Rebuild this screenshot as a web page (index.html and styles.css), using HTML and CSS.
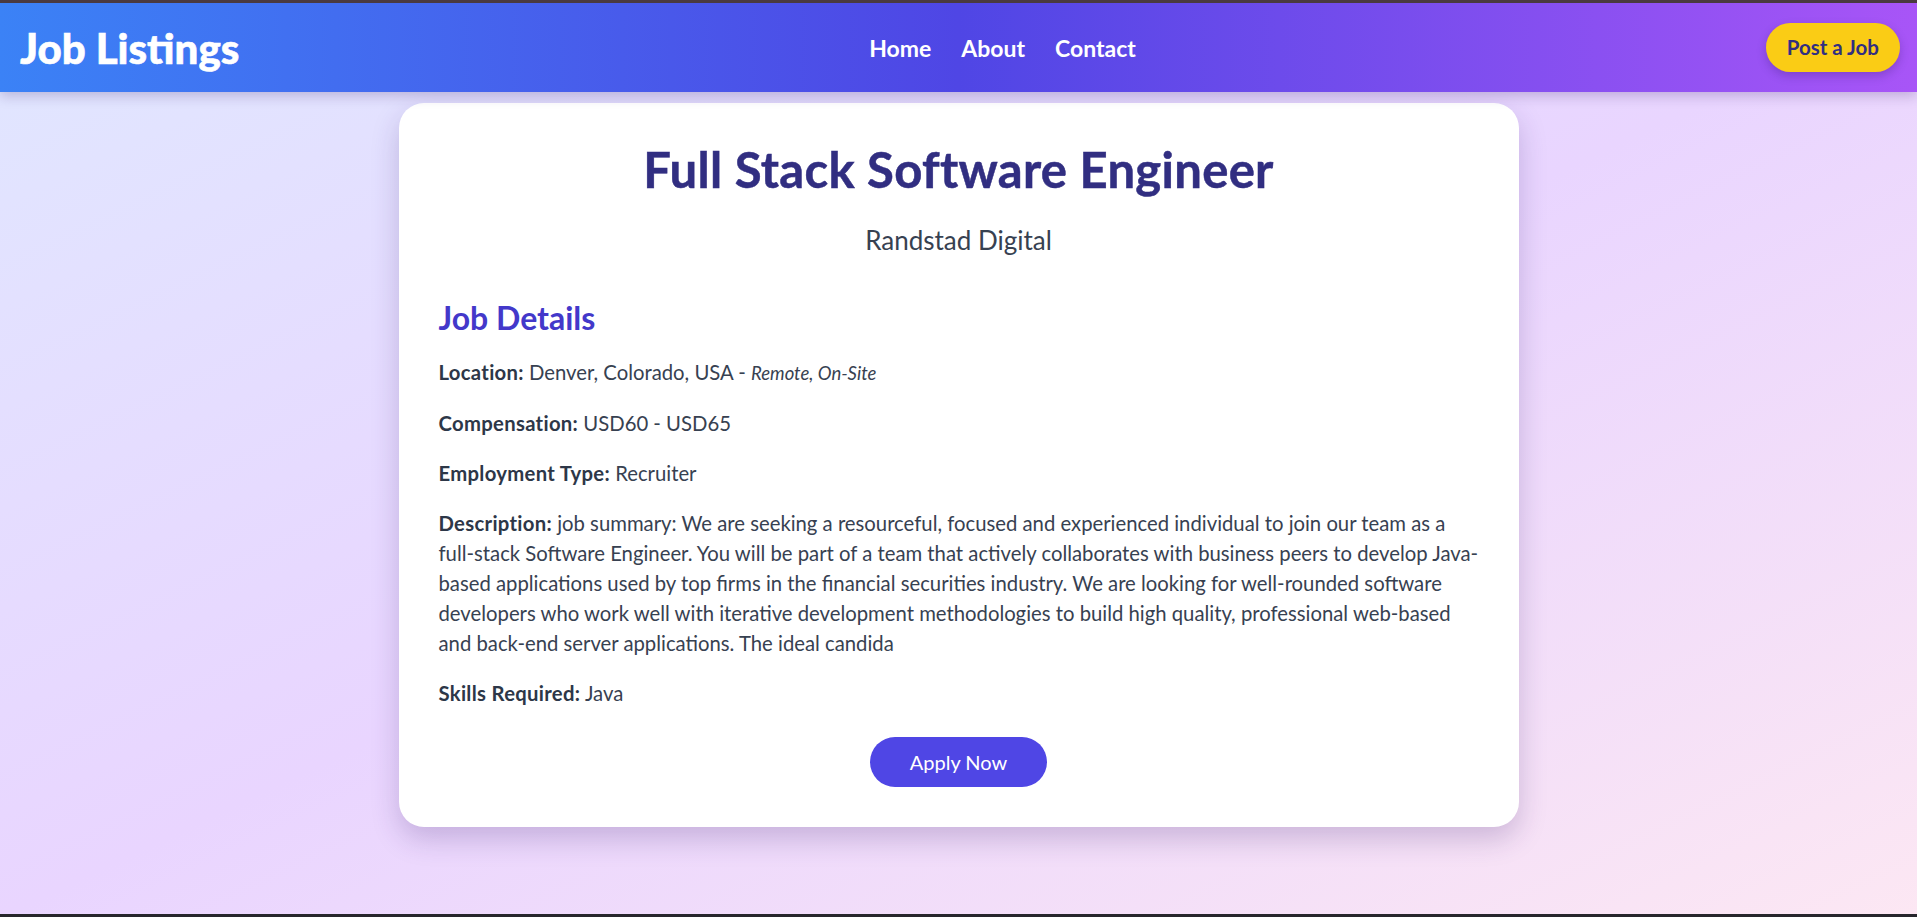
FILE: index.html
```html
<!DOCTYPE html>
<html lang="en">
<head>
<meta charset="utf-8">
<title>Job Listings</title>
<link rel="stylesheet" href="styles.css">
</head>
<body>
<header class="topbar">
  <a class="logo" href="#">Job Listings</a>
  <nav class="nav">
    <a href="#">Home</a>
    <a href="#">About</a>
    <a href="#">Contact</a>
  </nav>
  <a class="post-btn" href="#">Post a Job</a>
</header>
<main class="main">
  <section class="card">
    <h1 class="title">Full Stack Software Engineer</h1>
    <p class="company">Randstad Digital</p>
    <h2 class="section-title">Job Details</h2>
    <p class="detail"><strong>Location:</strong> Denver, Colorado, USA - <em>Remote, On-Site</em></p>
    <p class="detail"><strong>Compensation:</strong> USD60 - USD65</p>
    <p class="detail"><strong>Employment Type:</strong> Recruiter</p>
    <p class="detail"><strong>Description:</strong> job summary: We are seeking a resourceful, focused and experienced individual to join our team as a full-stack Software Engineer. You will be part of a team that actively collaborates with business peers to develop Java-based applications used by top firms in the financial securities industry. We are looking for well-rounded software developers who work well with iterative development methodologies to build high quality, professional web-based and back-end server applications. The ideal candida</p>
    <p class="detail"><strong>Skills Required:</strong> Java</p>
    <div class="actions">
      <a class="apply-btn" href="#">Apply Now</a>
    </div>
  </section>
</main>
</body>
</html>
```

FILE: styles.css
```css
* {
  box-sizing: border-box;
}

html, body {
  margin: 0;
  padding: 0;
}

body {
  min-height: 100vh;
  font-family: "Segoe UI", Lato, "Noto Sans", sans-serif;
  color: #374151;
  background: linear-gradient(to bottom right, #e0e7ff, #e9d5ff, #fce7f3);
  border-top: 3px solid #4a3a40;
  border-bottom: 3px solid #27262c;
  display: flex;
  flex-direction: column;
}

a {
  text-decoration: none;
}

.topbar {
  display: flex;
  align-items: center;
  justify-content: space-between;
  height: 89px;
  padding: 0 17px 0 20px;
  background: linear-gradient(to right, #3b82f6, #4f46e5, #a855f7);
  box-shadow: 0 4px 12px rgba(40, 20, 90, 0.22);
  position: relative;
  z-index: 1;
}

.logo {
  color: #ffffff;
  font-size: 42px;
  font-weight: 900;
  line-height: 1;
  -webkit-text-stroke: 0.6px #ffffff;
}

.nav {
  display: flex;
  gap: 30px;
}

.nav a {
  color: #ffffff;
  font-size: 23px;
  font-weight: 700;
}

.post-btn {
  display: inline-block;
  background: #facc15;
  color: #312e81;
  font-size: 20.5px;
  font-weight: 700;
  line-height: 25px;
  padding: 12px 21px;
  border-radius: 999px;
  box-shadow: 0 4px 10px rgba(40, 20, 90, 0.25);
}

.main {
  flex: 1;
  padding: 11px 20px 40px;
}

.card {
  max-width: 1120px;
  margin: 0 auto;
  background: #ffffff;
  border-radius: 25px;
  padding: 40px;
  box-shadow: 0 12px 28px rgba(60, 30, 110, 0.22);
}

.title {
  margin: 0;
  text-align: center;
  color: #312e81;
  font-size: 49px;
  font-weight: 700;
  line-height: 52px;
  letter-spacing: 0.3px;
  -webkit-text-stroke: 0.5px #312e81;
}

.company {
  margin: 31px 0 0;
  text-align: center;
  font-size: 26px;
  line-height: 29px;
  color: #374151;
}

.section-title {
  margin: 45px 0 0;
  color: #4338ca;
  font-size: 32px;
  font-weight: 700;
  line-height: 36px;
}

.detail {
  margin: 21px 0 0;
  font-size: 20.3px;
  line-height: 30px;
}

.detail + .detail {
  margin-top: 20px;
}

.detail strong {
  color: #2d3748;
  font-weight: 700;
  letter-spacing: 0.3px;
}

.detail em {
  font-size: 18.5px;
}

.actions {
  display: flex;
  justify-content: center;
  margin-top: 29px;
}

.apply-btn {
  display: inline-block;
  background: #4f46e5;
  color: #ffffff;
  font-size: 20px;
  line-height: 24px;
  padding: 13px 40px;
  border-radius: 999px;
}
```
